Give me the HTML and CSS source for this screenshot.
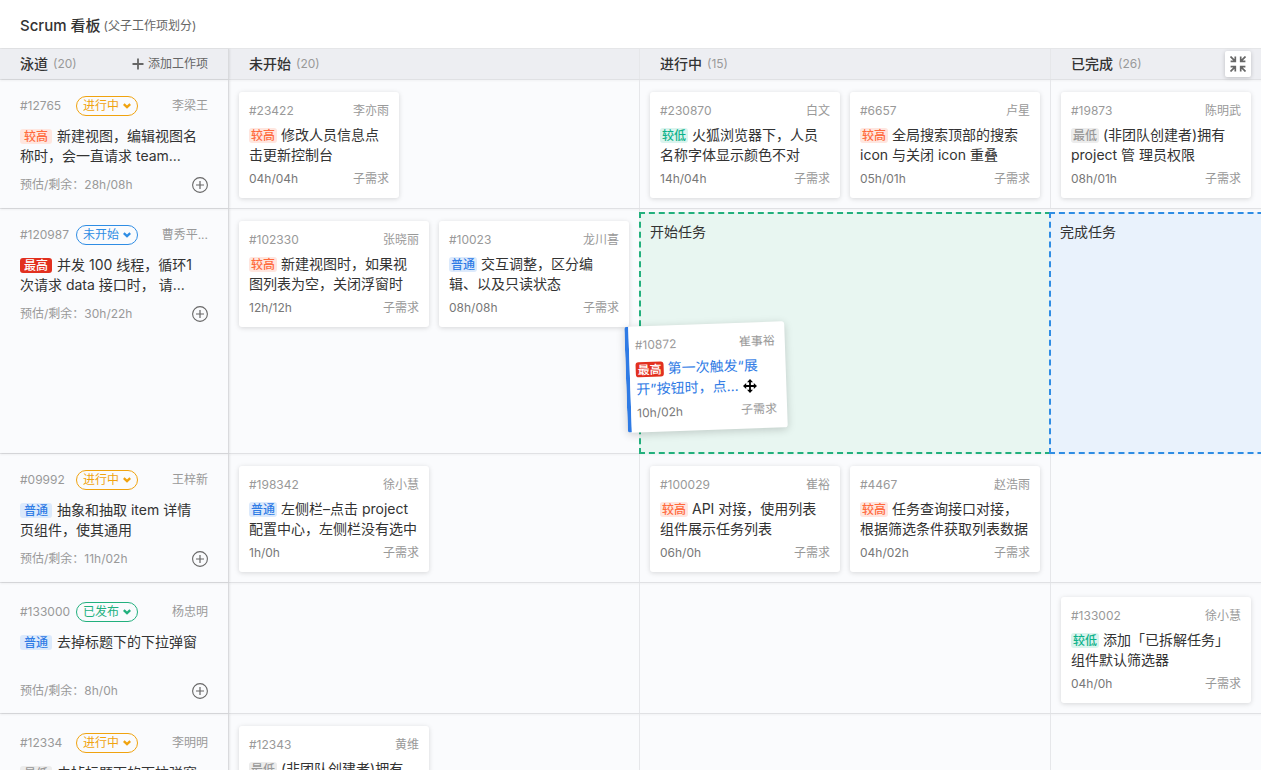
FILE: index.html
```html
<!DOCTYPE html>
<html lang="zh-CN">
<head>
    <meta charset="UTF-8">
    <meta name="viewport" content="width=device-width, initial-scale=1.0">
    <title>Scrum 看板</title>
    <link rel="stylesheet" href="styles.css">
</head>
<body>
    <!-- Shared icons -->
    <svg class="icon-defs" width="0" height="0" aria-hidden="true">
        <symbol id="icon-chevron" viewBox="0 0 8 6"><path d="M0.8 1.2 L4 4.2 L7.2 1.2" fill="none" stroke="currentColor" stroke-width="2.3"/></symbol>
        <symbol id="icon-add" viewBox="0 0 16 16"><g fill="none" stroke="currentColor"><circle cx="8" cy="8" r="7.4" stroke-width="1.1"/><path d="M8 4v8M4 8h8" stroke-width="1.2"/></g></symbol>
    </svg>

    <header class="page-header">
        <h1>Scrum 看板</h1>
        <span class="subtitle">(父子工作项划分)</span>
    </header>

    <button class="collapse-btn" type="button" aria-label="收起">
        <svg width="16" height="16" viewBox="0 0 16 16" fill="none" stroke="currentColor" stroke-width="1.7"><path d="M0.5 0.5l4.6 4.6M5.3 0.6v4.7H0.6M15.5 0.5l-4.6 4.6M10.7 0.6v4.7h4.7M0.5 15.5l4.6-4.6M5.3 15.4v-4.7H0.6M15.5 15.5l-4.6-4.6M10.7 15.4v-4.7h4.7"/></svg>
    </button>

    <main class="board">
        <!-- Column titles -->
        <div class="row row-head">
            <div class="lane">
                <h2>泳道</h2><span class="count">(20)</span>
                <button class="add-btn" type="button">
                    <svg width="12" height="12" viewBox="0 0 12 12" fill="none" stroke="currentColor" stroke-width="1.8"><path d="M6 0.5v11M0.5 6h11"/></svg>
                    添加工作项
                </button>
            </div>
            <div class="cell"><h2>未开始</h2><span class="count">(20)</span></div>
            <div class="cell"><h2>进行中</h2><span class="count">(15)</span></div>
            <div class="cell"><h2>已完成</h2><span class="count">(26)</span></div>
        </div>

        <div class="row">
            <div class="lane">
                <div class="lane-top">
                    <span class="lane-id">#12765</span>
                    <span class="status status-doing"><select aria-label="状态"><option>进行中</option></select><svg><use href="#icon-chevron"/></svg></span>
                    <span class="owner">李梁王</span>
                </div>
                <p class="title"><span class="tag tag-high">较高</span>新建视图，编辑视图名称时，会一直请求 team...</p>
                <div class="lane-bottom"><span>预估/剩余：28h/08h</span><button class="plus-btn" type="button" aria-label="添加"><svg><use href="#icon-add"/></svg></button></div>
            </div>
            <div class="cell">
                <article class="card card-small">
                    <div class="card-top"><span>#23422</span><span>李亦雨</span></div>
                    <p class="title"><span class="tag tag-high">较高</span>修改人员信息点击更新控制台</p>
                    <div class="card-bottom"><span class="hours">04h/04h</span><span>子需求</span></div>
                </article>
            </div>
            <div class="cell">
                <article class="card">
                    <div class="card-top"><span>#230870</span><span>白文</span></div>
                    <p class="title"><span class="tag tag-low">较低</span>火狐浏览器下，人员名称字体显示颜色不对</p>
                    <div class="card-bottom"><span class="hours">14h/04h</span><span>子需求</span></div>
                </article>
                <article class="card">
                    <div class="card-top"><span>#6657</span><span>卢星</span></div>
                    <p class="title"><span class="tag tag-high">较高</span>全局搜索顶部的搜索 icon 与关闭 icon 重叠</p>
                    <div class="card-bottom"><span class="hours">05h/01h</span><span>子需求</span></div>
                </article>
            </div>
            <div class="cell">
                <article class="card">
                    <div class="card-top"><span>#19873</span><span>陈明武</span></div>
                    <p class="title"><span class="tag tag-lowest">最低</span>(非团队创建者)拥有 project 管 理员权限</p>
                    <div class="card-bottom"><span class="hours">08h/01h</span><span>子需求</span></div>
                </article>
            </div>
        </div>

        <div class="row">
            <div class="lane">
                <div class="lane-top">
                    <span class="lane-id">#120987</span>
                    <span class="status status-todo"><select aria-label="状态"><option>未开始</option></select><svg><use href="#icon-chevron"/></svg></span>
                    <span class="owner">曹秀平...</span>
                </div>
                <p class="title"><span class="tag tag-highest">最高</span>并发 100 线程，循环1<br>次请求 data 接口时， 请...</p>
                <div class="lane-bottom"><span>预估/剩余：30h/22h</span><button class="plus-btn" type="button" aria-label="添加"><svg><use href="#icon-add"/></svg></button></div>
            </div>
            <div class="cell">
                <article class="card">
                    <div class="card-top"><span>#102330</span><span>张晓丽</span></div>
                    <p class="title"><span class="tag tag-high">较高</span>新建视图时，如果视图列表为空，关闭浮窗时</p>
                    <div class="card-bottom"><span class="hours">12h/12h</span><span>子需求</span></div>
                </article>
                <article class="card">
                    <div class="card-top"><span>#10023</span><span>龙川喜</span></div>
                    <p class="title"><span class="tag tag-normal">普通</span>交互调整，区分编辑、以及只读状态</p>
                    <div class="card-bottom"><span class="hours">08h/08h</span><span>子需求</span></div>
                </article>
                <!-- Empty slot the dragged card came from -->
                <div class="card-slot"></div>
            </div>
            <div class="cell cell-drop"><div class="drop-zone drop-start">开始任务</div></div>
            <div class="cell cell-drop"><div class="drop-zone drop-finish">完成任务</div></div>

            <!-- Card being dragged -->
            <article class="card card-small card-dragging">
                <div class="card-top"><span>#10872</span><span>崔事裕</span></div>
                <p class="title"><span class="tag tag-highest">最高</span>第一次触发“展<br>开”按钮时，点...</p>
                <div class="card-bottom"><span class="hours">10h/02h</span><span>子需求</span></div>
            </article>
            <svg class="move-cursor" width="16" height="16" viewBox="0 0 16 16" aria-hidden="true"><path d="M8 1L5 4.2h2.1v2.9H4.2V5L1 8l3.2 3V8.9h2.9v2.9H5L8 15l3-3.2H8.9V8.9h2.9V11L15 8l-3.2-3v2.1H8.9V4.2H11z" fill="#000" stroke="#fff" stroke-width="1.6" paint-order="stroke"/></svg>
        </div>

        <div class="row">
            <div class="lane">
                <div class="lane-top">
                    <span class="lane-id">#09992</span>
                    <span class="status status-doing"><select aria-label="状态"><option>进行中</option></select><svg><use href="#icon-chevron"/></svg></span>
                    <span class="owner">王梓新</span>
                </div>
                <p class="title"><span class="tag tag-normal">普通</span>抽象和抽取 item 详情<br>页组件，使其通用</p>
                <div class="lane-bottom"><span>预估/剩余：11h/02h</span><button class="plus-btn" type="button" aria-label="添加"><svg><use href="#icon-add"/></svg></button></div>
            </div>
            <div class="cell">
                <article class="card">
                    <div class="card-top"><span>#198342</span><span>徐小慧</span></div>
                    <p class="title"><span class="tag tag-normal">普通</span>左侧栏–点击 project 配置中心，左侧栏没有选中</p>
                    <div class="card-bottom"><span class="hours">1h/0h</span><span>子需求</span></div>
                </article>
            </div>
            <div class="cell">
                <article class="card">
                    <div class="card-top"><span>#100029</span><span>崔裕</span></div>
                    <p class="title"><span class="tag tag-high">较高</span>API 对接，使用列表组件展示任务列表</p>
                    <div class="card-bottom"><span class="hours">06h/0h</span><span>子需求</span></div>
                </article>
                <article class="card">
                    <div class="card-top"><span>#4467</span><span>赵浩雨</span></div>
                    <p class="title"><span class="tag tag-high">较高</span>任务查询接口对接，根据筛选条件获取列表数据</p>
                    <div class="card-bottom"><span class="hours">04h/02h</span><span>子需求</span></div>
                </article>
            </div>
            <div class="cell"></div>
        </div>

        <div class="row row-tall">
            <div class="lane">
                <div class="lane-top">
                    <span class="lane-id">#133000</span>
                    <span class="status status-released"><select aria-label="状态"><option>已发布</option></select><svg><use href="#icon-chevron"/></svg></span>
                    <span class="owner">杨忠明</span>
                </div>
                <p class="title"><span class="tag tag-normal">普通</span>去掉标题下的下拉弹窗</p>
                <div class="lane-bottom"><span>预估/剩余：8h/0h</span><button class="plus-btn" type="button" aria-label="添加"><svg><use href="#icon-add"/></svg></button></div>
            </div>
            <div class="cell"></div>
            <div class="cell"></div>
            <div class="cell cell-low">
                <article class="card">
                    <div class="card-top"><span>#133002</span><span>徐小慧</span></div>
                    <p class="title"><span class="tag tag-low">较低</span>添加「已拆解任务」组件默认筛选器</p>
                    <div class="card-bottom"><span class="hours">04h/0h</span><span>子需求</span></div>
                </article>
            </div>
        </div>

        <div class="row row-tall">
            <div class="lane">
                <div class="lane-top">
                    <span class="lane-id">#12334</span>
                    <span class="status status-doing"><select aria-label="状态"><option>进行中</option></select><svg><use href="#icon-chevron"/></svg></span>
                    <span class="owner">李明明</span>
                </div>
                <p class="title"><span class="tag tag-lowest">最低</span>去掉标题下的下拉弹窗</p>
            </div>
            <div class="cell">
                <article class="card">
                    <div class="card-top"><span>#12343</span><span>黄维</span></div>
                    <p class="title"><span class="tag tag-lowest">最低</span>(非团队创建者)拥有</p>
                </article>
            </div>
            <div class="cell"></div>
            <div class="cell"></div>
        </div>
    </main>
</body>
</html>
```
FILE: styles.css
```css
:root {
    --text: #333;
    --text-light: #999;
    --line: #e0e1e4;
    --blue: #2f7be5;
    --green: #22b07d;
}

* {
    box-sizing: border-box;
}

body {
    margin: 0;
    height: 100vh;
    display: flex;
    flex-direction: column;
    overflow: hidden;
    font-family: Inter, "Noto Sans CJK SC", sans-serif;
    font-size: 14px;
    line-height: 20px;
    color: var(--text);
    background: #fff;
}

h1, h2, p {
    margin: 0;
}

button, select {
    font: inherit;
    color: inherit;
    background: none;
    border: none;
    padding: 0;
    cursor: pointer;
}

.icon-defs {
    position: absolute;
}

.page-header {
    flex: none;
    display: flex;
    align-items: center;
    gap: 3px;
    height: 48px;
    padding: 4px 20px 0;
}

.page-header h1 {
    font-size: 15px;
    font-weight: 500;
}

.subtitle {
    font-size: 12px;
    color: #666;
}

.collapse-btn {
    position: absolute;
    top: 51px;
    right: 10px;
    z-index: 5;
    display: flex;
    align-items: center;
    justify-content: center;
    width: 26px;
    height: 26px;
    color: #666;
    background: #fff;
    border-radius: 2px;
    box-shadow: 0 1px 4px rgba(0, 0, 0, 0.2);
}

/* Board */
.board {
    flex: 1;
    min-height: 0;
    overflow: auto;
    scrollbar-width: none;
    background: #fafbfd;
}

.row {
    position: relative;
    display: grid;
    grid-template-columns: 229px repeat(3, 411px);
    width: max-content;
    min-width: 100%;
    border-bottom: 1px solid var(--line);
    box-shadow: 0 1px 2px rgba(0, 0, 0, 0.04);
}

.lane {
    padding: 16px 20px 14px;
    border-right: 1px solid #d9dadd;
    box-shadow: 1px 0 2px rgba(0, 0, 0, 0.08);
}

.cell {
    display: flex;
    flex-wrap: wrap;
    align-content: flex-start;
    gap: 10px;
    padding: 12px 10px 10px;
    border-right: 1px solid #e6e7ea;
}

.row-tall .lane {
    padding-top: 19px;
    padding-bottom: 13px;
}

.cell-low {
    padding-top: 14px;
}

.row-head {
    height: 32px;
    background: #edeef2;
    border-top: 1px solid #e5e6e8;
}

.row-head .lane,
.row-head .cell {
    display: flex;
    flex-wrap: nowrap;
    align-items: center;
    gap: 5px;
    padding: 0 20px;
}

.row-head h2 {
    font-size: 14px;
    font-weight: 500;
}

.count {
    font-size: 12px;
    color: var(--text-light);
}

.add-btn {
    display: flex;
    align-items: center;
    gap: 4px;
    margin-left: auto;
    font-size: 12px;
    color: #666;
}

/* Lane */
.lane-top,
.lane-bottom {
    display: flex;
    align-items: center;
    font-size: 12px;
    color: var(--text-light);
}

.lane-top {
    height: 20px;
    margin-bottom: 10px;
}

.lane-id {
    width: 56px;
}

.owner {
    margin-left: auto;
}

.status {
    position: relative;
    width: 62px;
    height: 20px;
}

.status select {
    appearance: none;
    width: 100%;
    height: 100%;
    padding: 0 6px;
    line-height: 18px;
    border: 1px solid currentColor;
    border-radius: 10px;
}

.status svg {
    position: absolute;
    top: 7px;
    right: 7px;
    width: 8px;
    height: 6px;
    pointer-events: none;
}

.status-doing {
    color: #f0a30f;
}

.status-todo {
    color: #2f8de4;
}

.status-released {
    color: var(--green);
}

.lane .title {
    min-height: 40px;
    margin-bottom: 10px;
}

.lane-bottom {
    justify-content: space-between;
    height: 18px;
}

.plus-btn {
    display: flex;
    color: #666;
}

.plus-btn svg {
    width: 16px;
    height: 16px;
}

/* Priority tags */
.tag {
    display: inline-block;
    height: 15px;
    margin-right: 4px;
    padding: 0 2px;
    font-size: 12px;
    font-weight: 500;
    line-height: 15px;
    border-radius: 3px;
}

.lane .tag {
    margin-right: 5px;
    padding: 0 4px;
}

.tag-highest {
    color: #fff;
    background: #e2301f;
}

.tag-high {
    color: #ff6a3c;
    background: #ffe6df;
}

.tag-normal {
    color: #2f7be5;
    background: #dceafc;
}

.tag-low {
    color: #0db28a;
    background: #daf4ee;
}

.tag-lowest {
    color: var(--text-light);
    background: #ececec;
}

/* Cards */
.card {
    width: 190px;
    height: 106px;
    padding: 10px;
    background: #fff;
    border-radius: 3px;
    box-shadow: 0 1px 5px rgba(0, 0, 0, 0.15);
}

.card-small {
    width: 160px;
}

.card-slot {
    width: 160px;
    height: 106px;
}

.card-top,
.card-bottom {
    display: flex;
    justify-content: space-between;
    font-size: 12px;
    line-height: 18px;
    color: var(--text-light);
}

.card .title {
    margin: 5px 0;
}

.hours {
    color: #777;
}

.card-dragging {
    position: absolute;
    top: 115px;
    left: 626px;
    z-index: 2;
    padding-left: 6px;
    border-left: 4px solid var(--blue);
    box-shadow: 0 2px 8px rgba(0, 0, 0, 0.18);
    transform: rotate(-2deg);
}

.card-dragging .title {
    color: var(--blue);
}

.move-cursor {
    position: absolute;
    top: 169px;
    left: 742px;
    z-index: 3;
}

/* Drop targets */
.cell-drop {
    align-content: stretch;
    padding: 3px 0 0;
    border-right: none;
}

.drop-zone {
    flex: 1;
    margin: 0 0 -1px -1px;
    padding: 8px 9px;
    border: 2px dashed;
}

.drop-start {
    background: #e8f6f1;
    border-color: var(--green);
    border-right: none;
}

.drop-finish {
    margin-left: -2px;
    background: #e9f2fc;
    border-color: #2f8de4;
}
```
